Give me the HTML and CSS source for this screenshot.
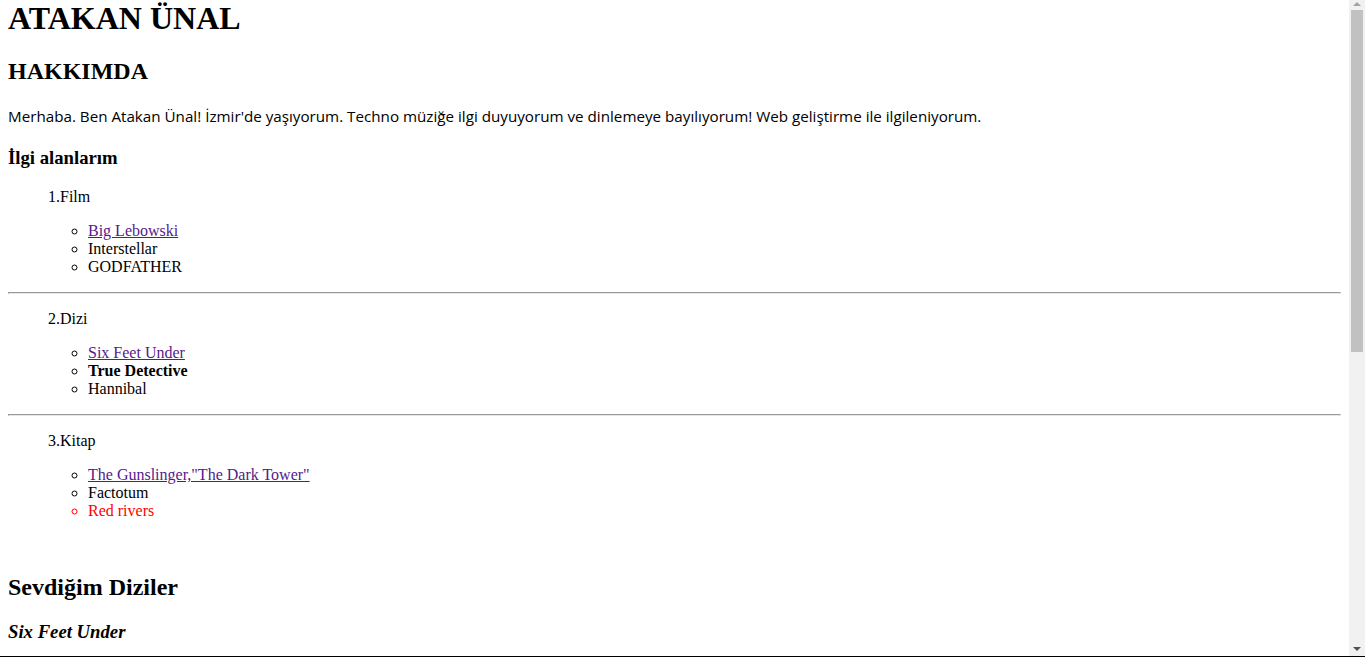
FILE: index.html
```html
<!DOCTYPE html>
<html lang="tr">
<head>
<meta charset="utf-8">
<title>Atakan Ünal</title>
<link rel="stylesheet" href="styles.css">
</head>
<body>
<h1 class="title">ATAKAN ÜNAL</h1>
<h2>HAKKIMDA</h2>
<p class="about">Merhaba. Ben Atakan Ünal! İzmir'de yaşıyorum. Techno müziğe ilgi duyuyorum ve dinlemeye bayılıyorum! Web geliştirme ile ilgileniyorum.</p>
<h3>İlgi alanlarım</h3>

<div class="category">
  <p class="cat-title">1.Film</p>
  <ul class="items">
    <li><a class="visited" href="#">Big Lebowski</a></li>
    <li>Interstellar</li>
    <li>GODFATHER</li>
  </ul>
</div>
<hr>
<div class="category">
  <p class="cat-title">2.Dizi</p>
  <ul class="items">
    <li><a class="visited" href="#">Six Feet Under</a></li>
    <li><strong>True Detective</strong></li>
    <li>Hannibal</li>
  </ul>
</div>
<hr>
<div class="category">
  <p class="cat-title">3.Kitap</p>
  <ul class="items">
    <li><a class="visited" href="#">The Gunslinger,"The Dark Tower"</a></li>
    <li>Factotum</li>
    <li class="red">Red rivers</li>
  </ul>
</div>
<br>
<h2>Sevdiğim Diziler</h2>
<h3><em>Six Feet Under</em></h3>
<p>Los Angeles'ta bir cenaze evini işleten Fisher ailesinin hikayesi.</p>
<h3><em>True Detective</em></h3>
<p>Louisiana'da işlenen bir cinayetin peşine düşen iki dedektifin hikayesi.</p>
<h3><em>Hannibal</em></h3>
<p>FBI profilcisi Will Graham ile psikiyatrist Dr. Hannibal Lecter'in hikayesi.</p>
<div class="spacer"></div>

<div class="scrollbar" aria-hidden="true">
  <div class="arrow up"></div>
  <div class="track"><div class="thumb"></div></div>
  <div class="arrow down"></div>
</div>
<div class="frame-bottom" aria-hidden="true"></div>
</body>
</html>
```
FILE: styles.css
```css
html, body {
  background: #fff;
}
body {
  margin: 0 24px 8px 8px;
  font-family: "Liberation Serif", "Times New Roman", serif;
  font-size: 16px;
  color: #000;
}
.title {
  margin-top: 0;
}
.about {
  font-family: "Open Sans", "Noto Sans", sans-serif;
  font-size: 15.2px;
  line-height: 23.3px;
}
.category {
  padding-left: 40px;
  margin: 16px 0;
}
.cat-title {
  margin: 16px 0;
}
.items {
  margin: 0;
  padding-left: 40px;
  list-style-type: circle;
}
a.visited {
  color: #551a8b;
  text-decoration: underline;
}
.red {
  color: #ff0000;
}
hr {
  margin: 8px 0;
  border-style: solid;
  border-width: 1px;
  border-top-color: #9a9a9a;
  border-left-color: #9a9a9a;
  border-bottom-color: #e6e6e6;
  border-right-color: #e6e6e6;
}
.spacer {
  height: 700px;
}
.scrollbar {
  position: fixed;
  top: 0;
  right: 0;
  width: 16px;
  height: 100%;
  background: #f1f1f1;
  display: flex;
  flex-direction: column;
}
.arrow {
  height: 10px;
  flex: none;
  position: relative;
}
.arrow.up::before,
.arrow.down::before {
  content: "";
  position: absolute;
  left: 4px;
  width: 0;
  height: 0;
  border-left: 4px solid transparent;
  border-right: 4px solid transparent;
}
.arrow.up::before {
  top: 2px;
  border-bottom: 4px solid #a3a3a3;
}
.arrow.down {
  height: 17px;
}
.arrow.down::before {
  top: 7px;
  border-top: 4px solid #505050;
}
.track {
  flex: 1;
  padding: 0 2px;
}
.thumb {
  height: 342px;
  background: #c1c1c1;
}
.frame-bottom {
  position: fixed;
  left: 0;
  right: 0;
  bottom: 0;
  height: 1px;
  background: #000;
}
```
